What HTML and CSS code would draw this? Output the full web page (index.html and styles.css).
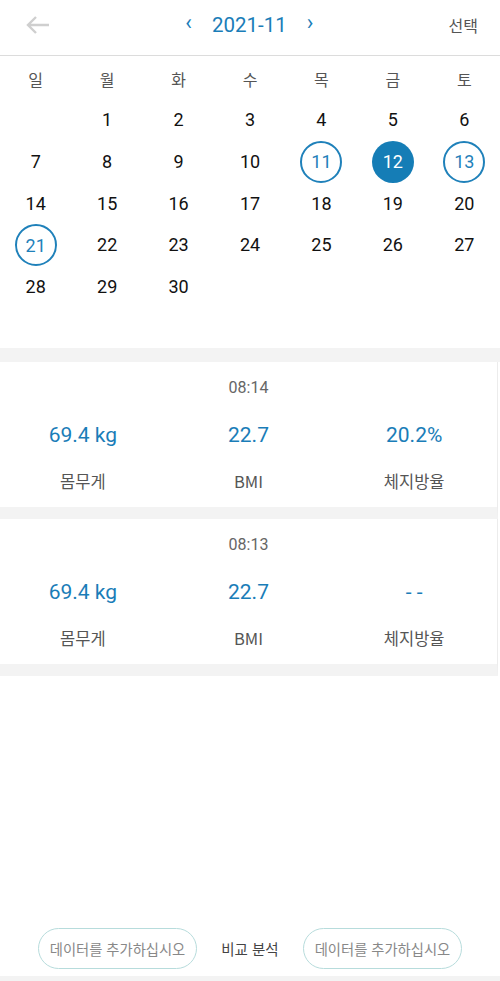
FILE: index.html
```html
<!DOCTYPE html>
<html lang="ko">
<head>
    <meta charset="UTF-8">
    <title>기록</title>
    <link rel="stylesheet" href="styles.css">
</head>
<body>

<div class="page">
    <div class="top-bar">
        <svg class="back" width="24" height="20" viewBox="0 0 24 20">
            <path d="M23 10H2M10 2L2 10l8 8" fill="none" stroke="#cfcfcf" stroke-width="2.4"/>
        </svg>
        <div class="month-nav">
            <span class="nav-arrow">‹</span>
            <span class="month">2021-11</span>
            <span class="nav-arrow">›</span>
        </div>
        <span class="select">선택</span>
    </div>

    <div class="calendar">
        <div class="week-head">
            <span>일</span><span>월</span><span>화</span><span>수</span><span>목</span><span>금</span><span>토</span>
        </div>
        <div class="days">
            <span></span>
            <span>1</span><span>2</span><span>3</span><span>4</span><span>5</span><span>6</span>
            <span>7</span><span>8</span><span>9</span><span>10</span>
            <span class="ring">11</span><span class="active">12</span><span class="ring">13</span>
            <span>14</span><span>15</span><span>16</span><span>17</span><span>18</span><span>19</span><span>20</span>
            <span class="ring">21</span><span>22</span><span>23</span><span>24</span><span>25</span><span>26</span><span>27</span>
            <span>28</span><span>29</span><span>30</span>
        </div>
    </div>

    <div class="record">
        <div class="time">08:14</div>
        <div class="values">
            <div class="cell"><b>69.4 kg</b><span>몸무게</span></div>
            <div class="cell"><b>22.7</b><span>BMI</span></div>
            <div class="cell"><b>20.2%</b><span>체지방율</span></div>
        </div>
    </div>

    <div class="record">
        <div class="time">08:13</div>
        <div class="values">
            <div class="cell"><b>69.4 kg</b><span>몸무게</span></div>
            <div class="cell"><b>22.7</b><span>BMI</span></div>
            <div class="cell"><b>- -</b><span>체지방율</span></div>
        </div>
    </div>

    <div class="spacer"></div>

    <div class="compare">
        <button class="pill">데이터를 추가하십시오</button>
        <span class="compare-label">비교 분석</span>
        <button class="pill">데이터를 추가하십시오</button>
    </div>
</div>

</body>
</html>
```

FILE: styles.css
```css
body {
    margin: 0;
    font-family: Roboto, "Noto Sans CJK KR", sans-serif;
    background: #fff;
}
.page {
    display: flex;
    flex-direction: column;
    height: 981px;
}
.top-bar {
    height: 56px;
    box-sizing: border-box;
    border-bottom: 1px solid #dcdcdc;
    display: flex;
    align-items: center;
    padding: 0 22px 6px 26px;
}
.back {
    display: block;
}
.month-nav {
    flex: 1;
    display: flex;
    justify-content: center;
    align-items: center;
    gap: 20px;
    color: #1a7db8;
}
.month {
    font-size: 20.5px;
}
.nav-arrow {
    font-size: 22px;
    line-height: 20px;
    margin-top: -3px;
}
.select {
    font-family: "Noto Sans CJK KR", sans-serif;
    font-size: 16px;
    color: #555;
}
.calendar {
    padding-bottom: 40px;
    border-bottom: 14px solid #f3f3f3;
}
.week-head, .days {
    display: grid;
    grid-template-columns: repeat(7, 1fr);
    text-align: center;
}
.week-head {
    height: 43px;
    line-height: 46px;
    font-family: "Noto Sans CJK KR", sans-serif;
    font-size: 16px;
    color: #555;
}
.days span {
    height: 41.6px;
    display: flex;
    align-items: center;
    justify-content: center;
    font-size: 18px;
    color: #111;
}
.days .ring, .days .active {
    width: 42px;
    height: 42px;
    box-sizing: border-box;
    border-radius: 50%;
    margin: 0 auto;
}
.days .ring {
    border: 2px solid #1f81ba;
    color: #1f81ba;
}
.days .active {
    background: #157db6;
    color: #fff;
}
.record {
    background: #fff;
    margin-right: 2px;
    border-right: 1px solid #ececec;
    border-bottom: 12px solid #f3f3f3;
    padding-top: 16px;
}
.time {
    text-align: center;
    font-size: 16px;
    line-height: 20px;
    color: #666;
}
.values {
    display: grid;
    grid-template-columns: repeat(3, 1fr);
    padding: 26px 0 14px;
}
.cell {
    display: flex;
    flex-direction: column;
    align-items: center;
    gap: 23px;
}
.cell b {
    font-weight: normal;
    font-size: 21px;
    line-height: 22px;
    color: #1a7db8;
}
.cell span {
    font-family: "Noto Sans CJK KR", sans-serif;
    font-size: 16.5px;
    line-height: 24px;
    color: #555;
}
.spacer {
    flex: 1;
}
.compare {
    display: flex;
    justify-content: center;
    align-items: center;
    gap: 24px;
    padding-bottom: 7px;
    border-bottom: 5px solid #f3f3f3;
}
.pill {
    height: 41px;
    padding: 0 11px;
    border: 1px solid #b7dcdc;
    border-radius: 21px;
    background: #fff;
    font-family: "Noto Sans CJK KR", sans-serif;
    font-size: 14.3px;
    color: #888;
}
.compare-label {
    font-family: "Noto Sans CJK KR", sans-serif;
    font-size: 14.5px;
    color: #444;
}
```
